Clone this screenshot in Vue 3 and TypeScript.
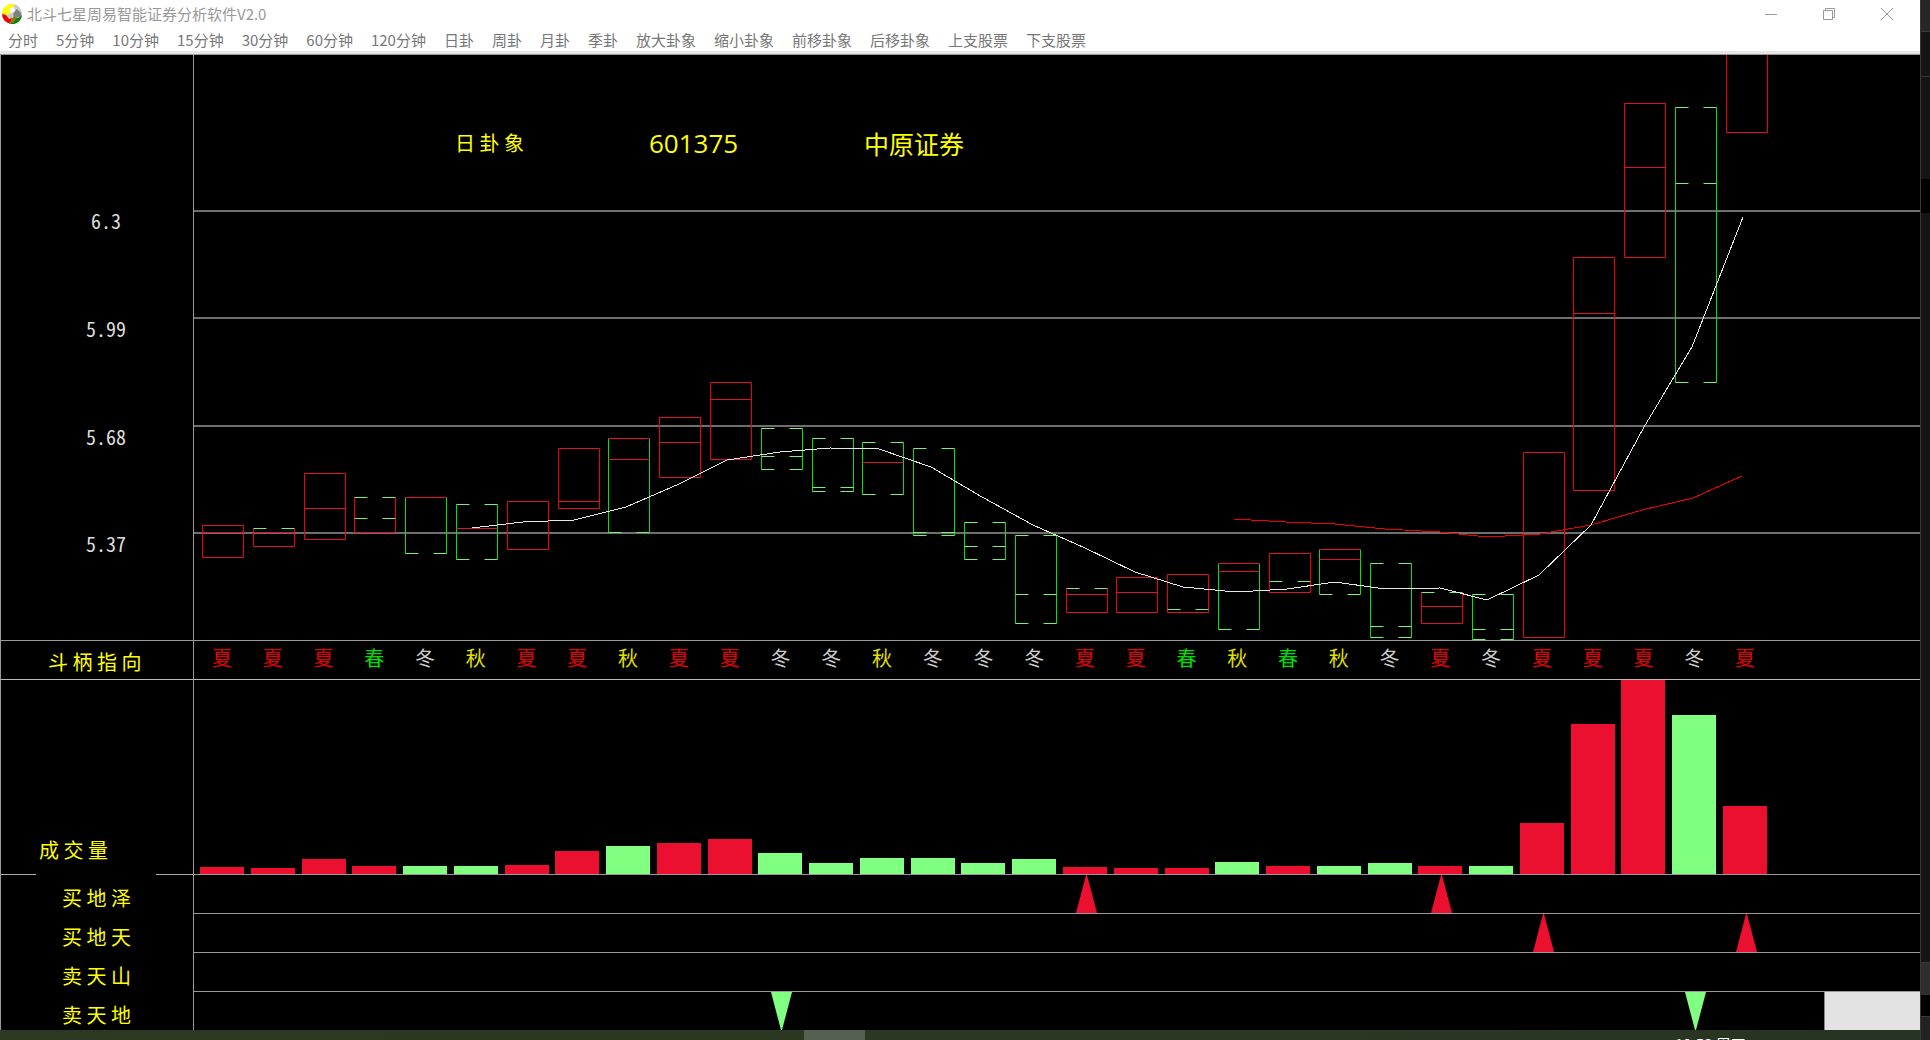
<script setup lang="ts">
type Tone = 'red' | 'green'
interface Rung {
  y: number
  tone: Tone
}
interface Hexagram {
  x: number
  tone: Tone
  rungs: Rung[]
}
interface Signal {
  label: string
  tone: Tone
  days: number[]
}

const minuteMenus: string[] = ['分时', '5分钟', '10分钟', '15分钟', '30分钟', '60分钟', '120分钟']
const guaMenus: string[] = ['日卦', '周卦', '月卦', '季卦', '放大卦象', '缩小卦象', '前移卦象', '后移卦象', '上支股票', '下支股票']
const menus: string[] = [...minuteMenus, ...guaMenus]

const prices: string[] = ['6.3', '5.99', '5.68', '5.37']
const gridLines: number[] = [156, 263, 371, 478]

const plotWidth = 1727
const slots = 34
const pitch = plotWidth / slots
const boxWidth = 41

// Side tone, then each rung as tone + height on the plot.
const source: string[] = [
  'r r470 r477 r502', 'r g473 r477 r491', 'r r418 r453 r484', 'r g442 g463 r477',
  'g r442 g498', 'g g449 r473 g504', 'r r446 r494', 'r r393 r446 r453',
  'g r383 r404 g477', 'r r362 r387 r422', 'r r327 r344 r404', 'g g373 g401 g414',
  'g g383 g432 g436', 'g g387 r407 g439', 'g g393 g477 g480', 'g g467 g491 g504',
  'g g480 g539 g568', 'r g533 r539 r557', 'r r522 r537 r557', 'r r519 g554 r557',
  'g r508 r516 g574', 'r r498 g526 r537', 'g r494 r504 g539', 'g g508 g571 g582',
  'r g537 r551 r568', 'g g539 g574 g584', 'r r397 r582', 'r r202 r258 r435',
  'r r48 r112 r202', 'g g52 g128 g327', 'r r-6 r77',
]

const toTone = (c: string): Tone => (c === 'r' ? 'red' : 'green')

const hexagrams: Hexagram[] = source.map((line, i) => {
  const [side, ...rungs] = line.split(' ')
  return {
    x: Math.round(i * pitch + 9),
    tone: toTone(side),
    rungs: rungs.map((r) => ({ y: Number(r.slice(1)), tone: toTone(r[0]) })),
  }
})

function sides(h: Hexagram): string {
  const top = h.rungs[0].y
  const bottom = h.rungs[h.rungs.length - 1].y
  return `M${h.x} ${top}V${bottom}M${h.x + boxWidth} ${top}V${bottom}`
}

function rungPath(h: Hexagram, r: Rung): string {
  return r.tone === 'red'
    ? `M${h.x} ${r.y}h${boxWidth}`
    : `M${h.x} ${r.y}h13m15 0h13`
}

const shortAverage =
  '279,473 330,467 381,465 433,452 486,429 534,405 587,397 637,393 686,394 738,412 789,442 840,470 892,493 942,517 990,532 1043,537 1094,534 1142,527 1192,534 1247,533 1294,545 1346,520 1398,470 1451,372 1499,292 1550,162'
const longAverage =
  '1041,464 1093,467 1142,469 1192,474 1247,477 1294,482 1347,479 1398,470 1449,455 1500,443 1549,421'

const seasons: string[] = [...'夏夏夏春冬秋夏夏秋夏夏冬冬秋冬冬冬夏夏春秋春秋冬夏冬夏夏夏冬夏']
const seasonClass: Record<string, string> = { 春: 'spring', 夏: 'summer', 秋: 'autumn', 冬: 'winter' }

const volumes: number[] = [
  7, 6, 15, 8, 8, 8, 9, 23, 28, 31, 35, 21, 11, 16, 16, 11, 15, 7, 6, 6, 12, 8, 8, 11, 8, 8, 51, 151, 195, 160, 68,
]
const volumeTones: Tone[] = [...'rrrrggrrgrrggggggrrrgrggrgrrrgr'].map(toTone)
const peak = Math.max(...volumes)

const signals: Signal[] = [
  { label: '买 地 泽', tone: 'red', days: [17, 24] },
  { label: '买 地 天', tone: 'red', days: [26, 30] },
  { label: '卖 天 山', tone: 'green', days: [] },
  { label: '卖 天 地', tone: 'green', days: [11, 29] },
]
</script>

<template>
  <div class="desktop">
    <div class="window">
      <header class="titlebar">
        <svg class="logo" viewBox="0 0 20 20" preserveAspectRatio="none" aria-hidden="true">
          <circle cx="10" cy="10" r="10" fill="#c8c8c8" />
          <path d="M10 0A10 10 0 0 0 0 10L6 11L9 8L7 5L12 3L12 0Z" fill="#ffff00" />
          <path d="M0 10A10 10 0 0 0 8 19.800L10 14L7 15L4 11Z" fill="#f00000" />
          <path d="M20 11A10 10 0 0 1 8 20L11 14L16 14Z" fill="#108010" />
          <path d="M12 8L15 5L19 9L19 12L14 14L11 11Z" fill="#808080" />
          <path d="M7 19L12 12L15 14L11 19Z" fill="#8a7a10" />
          <path d="M7 5L12 3L13 7L9 10Z" fill="#ffffff" />
        </svg>
        <h1 class="title">北斗七星周易智能证券分析软件V2.0</h1>
        <div class="controls">
          <button type="button" aria-label="最小化">
            <svg viewBox="0 0 12 12"><path d="M0 6.500H12" /></svg>
          </button>
          <button type="button" aria-label="还原">
            <svg viewBox="0 0 12 12"><path d="M.5 2.500H9.500V11.500H.5ZM2.500 2.500V.5H11.500V9.500H9.500" /></svg>
          </button>
          <button type="button" aria-label="关闭">
            <svg viewBox="0 0 12 12"><path d="M0 0L12 12M12 0L0 12" /></svg>
          </button>
        </div>
      </header>

      <nav class="menubar">
        <button v-for="m in menus" :key="m" type="button">{{ m }}</button>
      </nav>

      <main class="board">
        <div class="axis price-axis">
          <span v-for="p in prices" :key="p" class="price">{{ p }}</span>
        </div>
        <section class="plot price-plot">
          <svg class="candles" :viewBox="`1 0 ${plotWidth - 1} 585`" preserveAspectRatio="none">
            <path v-for="y in gridLines" :key="y" class="grid-line" :d="`M0 ${y}H${plotWidth}`" />
            <g v-for="(h, i) in hexagrams" :key="i">
              <path :class="['side', h.tone]" :d="sides(h)" />
              <path v-for="(r, j) in h.rungs" :key="j" :class="['rung', r.tone]" :d="rungPath(h, r)" />
            </g>
            <polyline class="average long" :points="longAverage" />
            <polyline class="average short" :points="shortAverage" />
          </svg>
          <div class="heading">
            <span class="kind">日 卦 象</span>
            <span class="code">601375</span>
            <span class="name">中原证券</span>
          </div>
        </section>

        <div class="axis season-axis"><span class="tag">斗 柄 指 向</span></div>
        <section class="plot season-plot slots">
          <span v-for="(s, i) in seasons" :key="i" :class="['season', seasonClass[s]]">{{ s }}</span>
        </section>

        <div class="axis volume-axis"><span class="tag">成 交 量</span></div>
        <section class="plot volume-plot slots">
          <div
            v-for="(v, i) in volumes"
            :key="i"
            :class="['bar', volumeTones[i]]"
            :style="{ height: (v / peak) * 100 + '%' }"
          ></div>
        </section>

        <template v-for="(s, i) in signals" :key="s.label">
          <div class="axis signal-axis"><span class="tag">{{ s.label }}</span></div>
          <section class="plot signal-plot slots">
            <svg
              v-for="d in s.days"
              :key="d"
              :class="['marker', s.tone]"
              :style="{ gridColumn: d + 1 }"
              viewBox="0 0 21 39"
              preserveAspectRatio="none"
            >
              <path :d="s.tone === 'red' ? 'M10 0H11L21 39H0Z' : 'M0 0H21L11 39H10Z'" />
            </svg>
            <div v-if="i === signals.length - 1" class="panel"></div>
          </section>
        </template>
      </main>
    </div>

    <footer class="taskbar">
      <span class="task"></span>
      <span class="clock">19:53 周四</span>
    </footer>

    <aside class="backdrop">
      <i class="b1"></i><i class="b2"></i><i class="b3"></i><i class="b4"></i>
      <i class="b5"></i><i class="b6"></i><i class="b7"></i><i class="b8"></i>
    </aside>
  </div>
</template>

<style>
body {
  background: #000;
}
</style>

<style scoped>
.desktop {
  display: grid;
  grid-template-columns: minmax(0, 1fr) 10px;
  grid-template-rows: auto 10px;
  font-family: 'Noto Sans CJK SC', 'Noto Sans', sans-serif;
}
.window {
  background: #000;
}
button {
  padding: 0;
  border: 0;
  background: none;
  font: inherit;
  color: inherit;
}
.titlebar {
  display: flex;
  align-items: flex-start;
  height: 29px;
  padding: 0 4px 0 2px;
  background: #fff;
}
.logo {
  width: 20px;
  height: 20px;
  margin-top: 4px;
}
.title {
  flex: 1;
  margin: 0 0 0 5px;
  font-size: 15px;
  font-weight: 400;
  line-height: 28px;
  color: #999;
}
.controls {
  display: flex;
}
.controls button {
  display: flex;
  align-items: center;
  justify-content: center;
  width: 58px;
  height: 28px;
}
.controls svg {
  width: 12px;
  height: 12px;
  fill: none;
  stroke: #999;
}
.menubar {
  display: flex;
  gap: 18px;
  height: 22px;
  padding-left: 8px;
  border-bottom: 3px solid #e6e6e6;
  background: #fff;
  font-size: 15px;
  line-height: 22px;
  color: #777;
}
.menubar button {
  white-space: nowrap;
}
.board {
  display: grid;
  grid-template-columns: 193px minmax(0, 1fr);
  border-top: 1px solid #999;
}
.axis {
  box-sizing: border-box;
  border-left: 1px solid #999;
}
.plot {
  box-sizing: border-box;
  border-left: 1px solid #999;
  border-bottom: 1px solid #999;
}
.slots {
  display: grid;
  grid-template-columns: repeat(34, minmax(0, 1fr));
}
.tag {
  font-size: 20px;
  line-height: 30px;
  white-space: nowrap;
  color: #ff0;
}
.price-axis {
  display: grid;
  grid-template-rows: repeat(4, 1fr);
  padding-top: 154px;
  border-bottom: 1px solid #999;
}
.price {
  width: 210px;
  text-align: center;
  font-size: 20px;
  line-height: 24px;
  font-feature-settings: 'hwid';
  color: #ddd;
}
.price-plot {
  display: grid;
}
.candles {
  grid-area: 1 / 1;
  display: block;
  width: 100%;
  height: 585px;
  fill: none;
}
.candles path,
.candles polyline {
  vector-effect: non-scaling-stroke;
}
.grid-line {
  stroke: #ddd;
}
.side,
.rung {
  transform: translate(0.5px, 0.5px);
}
.side.red {
  stroke: #f00000;
}
.side.green {
  stroke: #00e600;
}
.rung.red {
  stroke: #e01030;
}
.rung.green {
  stroke: #78f078;
}
.average {
  shape-rendering: crispEdges;
}
.average.short {
  stroke: #e8e8e8;
}
.average.long {
  stroke: #f00000;
}
.heading {
  grid-area: 1 / 1;
  display: grid;
  grid-template-columns: 194px 215px auto;
  align-content: start;
  padding: 72px 0 0 261px;
  font-size: 25px;
  line-height: 32px;
  color: #ff0;
}
.kind {
  font-size: 20px;
}
.code {
  font-family: 'Open Sans', 'Noto Sans', sans-serif;
  font-size: 26px;
}
.season-axis {
  height: 39px;
  padding: 6px 0 0 47px;
  border-bottom: 1px solid #bbb;
}
.season-plot {
  border-bottom-color: #bbb;
}
.season {
  padding-left: 18px;
  font-size: 20px;
  line-height: 34px;
}
.spring {
  color: #00e000;
}
.summer {
  color: #e80000;
}
.autumn {
  color: #e0e000;
}
.winter {
  color: #ccc;
}
.volume-axis {
  display: flex;
  align-items: flex-end;
  height: 195px;
  padding: 0 0 10px 38px;
  background: linear-gradient(to right, #aaa 35px, transparent 35px 155px, #aaa 155px) bottom / 100% 1px no-repeat;
}
.volume-plot {
  align-items: end;
}
.bar {
  width: 44px;
  margin-left: 6px;
}
.bar.red {
  background: #eb1030;
}
.bar.green {
  background: #80ff80;
}
.signal-axis {
  height: 39px;
  padding: 8px 0 0 61px;
}
.signal-axis:nth-last-child(2),
.signal-plot:last-child {
  height: 38px;
}
.signal-plot:last-child {
  border-bottom: 0;
}
.marker {
  grid-row: 1;
  width: 21px;
  height: 38px;
  margin-left: 19px;
}
.marker.red {
  fill: #eb1030;
}
.marker.green {
  fill: #80ff80;
}
.panel {
  grid-row: 1;
  grid-column: 33 / -1;
  justify-self: end;
  width: 95px;
  border-left: 1px solid #888;
  background: #e3e3e3;
}
.taskbar {
  display: grid;
  grid-template-columns: 804px 61px 810px auto;
  height: 10px;
  overflow: hidden;
  background: linear-gradient(to right, #2d3821, #2b3722 60%, #273423);
}
.task {
  grid-column: 2;
  background: #566050;
}
.clock {
  grid-column: 4;
  padding-top: 4px;
  font-size: 15px;
  line-height: 20px;
  color: #fff;
}
.backdrop {
  grid-column: 2;
  grid-row: 1 / 3;
  display: flex;
  flex-direction: column;
  border-left: 1px solid #383838;
  background: #151515;
}
.backdrop i {
  border-bottom: 1px solid #383838;
}
.b1 {
  height: 31px;
  background: #262626;
}
.b2 {
  height: 44px;
}
.backdrop .b3 {
  height: 102px;
  border: 0;
}
.backdrop .b4 {
  height: 34px;
  border: 0;
  background: #000;
}
.b5 {
  flex: 1;
}
.backdrop .b6 {
  height: 32px;
  border: 0;
  background: #2e2e2e;
}
.b7 {
  height: 21px;
  background: #000;
}
.backdrop .b8 {
  height: 23px;
  border: 0;
  background: #222;
}
</style>
